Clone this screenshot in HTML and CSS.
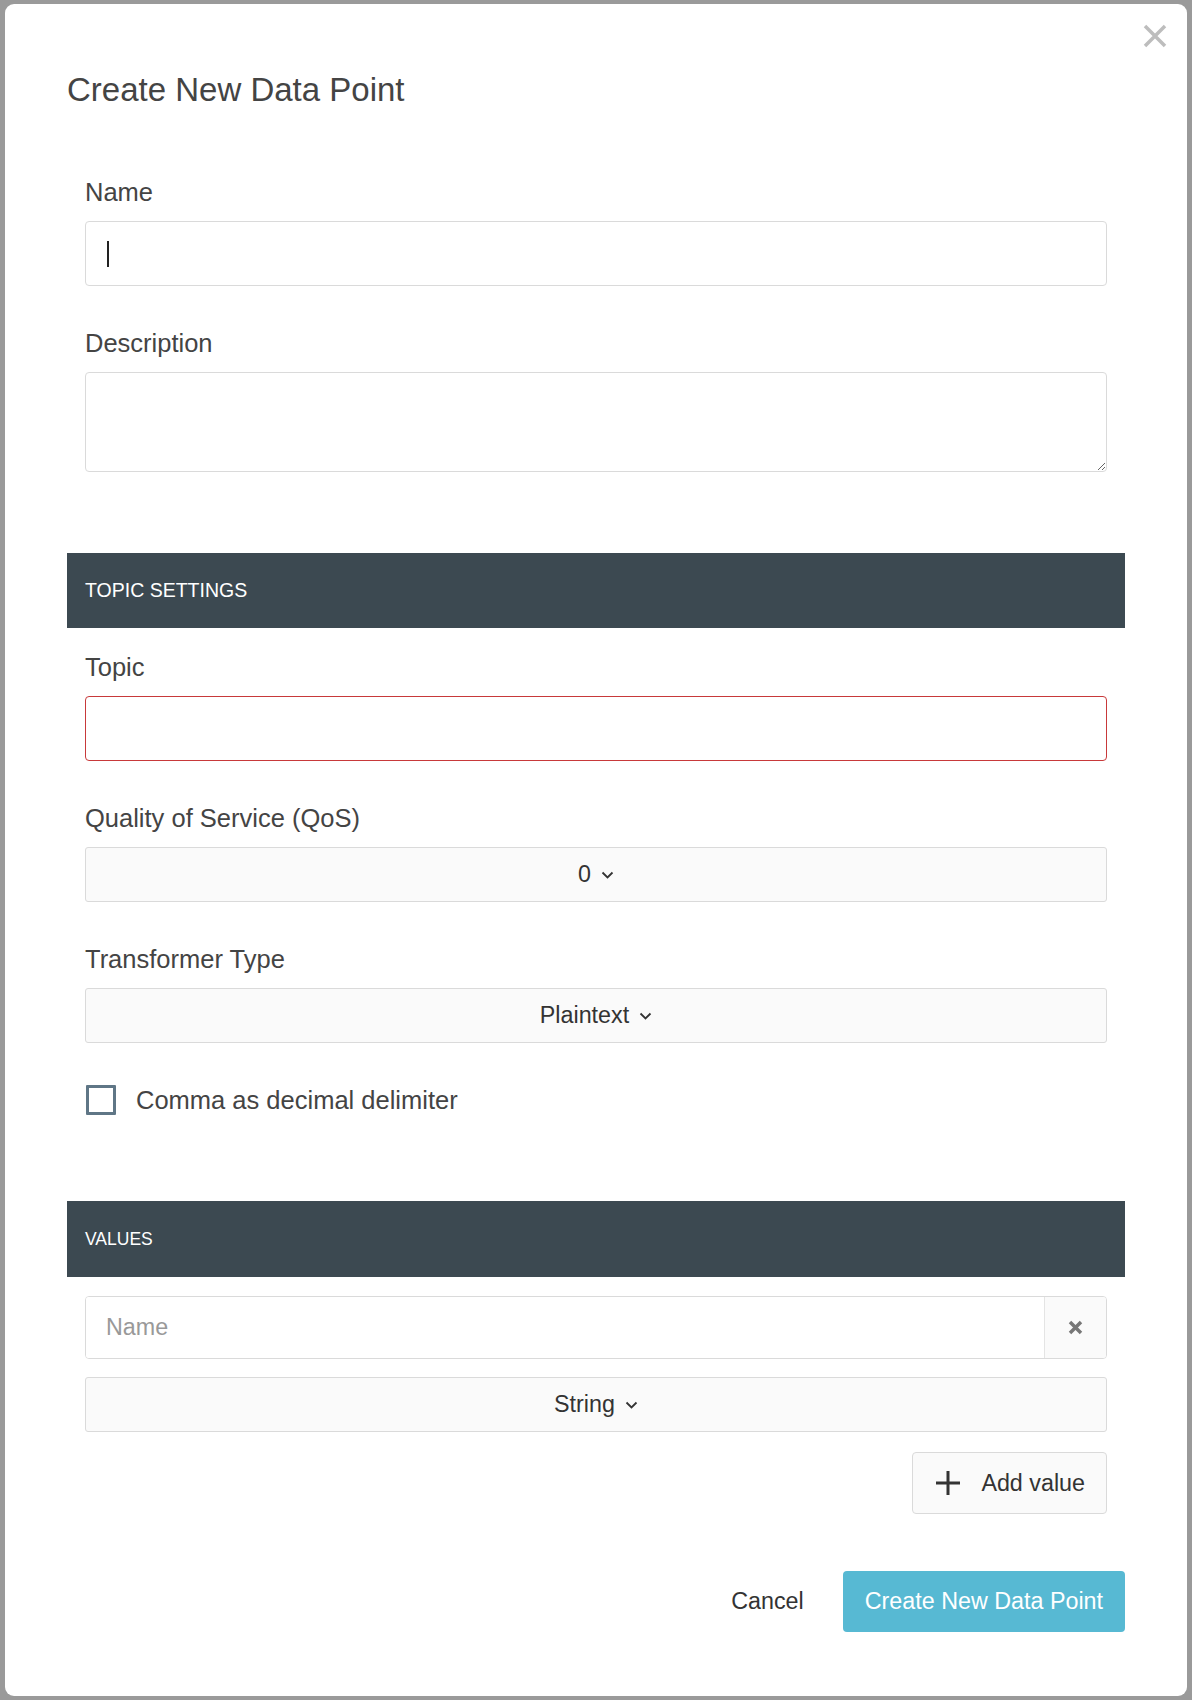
FILE: index.html
```html
<!DOCTYPE html>
<html lang="en">
<head>
    <meta charset="UTF-8">
    <meta name="viewport" content="width=device-width, initial-scale=1.0">
    <title>Create New Data Point</title>
    <link rel="stylesheet" href="styles.css">
</head>
<body>
    <div class="modal">
        <button class="close" type="button" aria-label="Close">
            <svg width="24" height="24" viewBox="0 0 24 24"><path d="M2 2L22 22M22 2L2 22" stroke="#bdbdbd" stroke-width="3.5" fill="none"/></svg>
        </button>

        <h2 class="modal-title">Create New Data Point</h2>

        <form>
            <div class="form-group">
                <label>Name</label>
                <div class="input-wrap">
                    <input type="text" class="form-control">
                    <span class="caret"></span>
                </div>
            </div>

            <div class="form-group">
                <label>Description</label>
                <textarea class="form-control textarea"></textarea>
            </div>

            <div class="section-title topic">TOPIC SETTINGS</div>

            <div class="form-group">
                <label>Topic</label>
                <input type="text" class="form-control invalid">
            </div>

            <div class="form-group">
                <label>Quality of Service (QoS)</label>
                <div class="select">
                    <span>0</span>
                    <svg width="13" height="8" viewBox="0 0 13 8"><path d="M1.5 1.5L6.5 6.5L11.5 1.5" stroke="#333" stroke-width="1.8" fill="none"/></svg>
                </div>
            </div>

            <div class="form-group">
                <label>Transformer Type</label>
                <div class="select">
                    <span>Plaintext</span>
                    <svg width="13" height="8" viewBox="0 0 13 8"><path d="M1.5 1.5L6.5 6.5L11.5 1.5" stroke="#333" stroke-width="1.8" fill="none"/></svg>
                </div>
            </div>

            <div class="checkbox-row">
                <span class="checkbox"></span>
                <span class="checkbox-label">Comma as decimal delimiter</span>
            </div>

            <div class="section-title values">VALUES</div>

            <div class="values-body">
                <div class="input-group">
                    <input type="text" placeholder="Name">
                    <span class="addon">
                        <svg width="15" height="15" viewBox="0 0 15 15"><path d="M2 2L13 13M13 2L2 13" stroke="#777" stroke-width="3.5" fill="none"/></svg>
                    </span>
                </div>

                <div class="select string-select">
                    <span>String</span>
                    <svg width="13" height="8" viewBox="0 0 13 8"><path d="M1.5 1.5L6.5 6.5L11.5 1.5" stroke="#333" stroke-width="1.8" fill="none"/></svg>
                </div>

                <div class="add-row">
                    <button type="button" class="btn-default">
                        <svg width="26" height="26" viewBox="0 0 26 26"><path d="M13 1V25M1 13H25" stroke="#333" stroke-width="3" fill="none"/></svg>
                        Add value
                    </button>
                </div>
            </div>

            <div class="modal-footer">
                <button type="button" class="btn-link">Cancel</button>
                <button type="button" class="btn-primary">Create New Data Point</button>
            </div>
        </form>
    </div>
</body>
</html>
```

FILE: styles.css
```css
body {
    font-family: "Liberation Sans", Arial, sans-serif;
    margin: 0;
    padding: 4px 5px;
    background-color: #9a9a9a;
}

button,
input,
textarea {
    font-family: inherit;
}

.modal {
    position: relative;
    width: 1182px;
    height: 1692px;
    box-sizing: border-box;
    background: white;
    border-radius: 9px;
    padding: 66px 62px 0;
}

.close {
    position: absolute;
    top: 20px;
    right: 20px;
    background: none;
    border: none;
    padding: 0;
    width: 24px;
    height: 24px;
}

.modal-title {
    margin: 0 0 67px;
    font-size: 33px;
    line-height: 40px;
    font-weight: normal;
    color: #444;
}

.form-group {
    padding: 0 18px;
    margin-bottom: 42px;
}

.form-group label {
    display: block;
    font-size: 25.5px;
    line-height: 30px;
    color: #444;
    margin-bottom: 14px;
}

.form-control {
    display: block;
    width: 100%;
    height: 65px;
    box-sizing: border-box;
    border: 1px solid #dadada;
    border-radius: 4px;
    background: white;
    outline: none;
}

.input-wrap {
    position: relative;
}

.caret {
    position: absolute;
    left: 22px;
    top: 20px;
    width: 2px;
    height: 26px;
    background: #222;
}

.textarea {
    height: 100px;
}

.invalid {
    border-color: #c8393a;
}

.section-title {
    display: flex;
    align-items: center;
    padding-left: 18px;
    background-color: #3c4951;
    color: white;
}

.section-title.topic {
    height: 75px;
    font-size: 19.5px;
    margin: 81px 0 24px;
}

.section-title.values {
    height: 76px;
    font-size: 17.5px;
    margin: 86px 0 19px;
}

.select {
    display: flex;
    justify-content: center;
    align-items: center;
    gap: 10px;
    height: 55px;
    box-sizing: border-box;
    border: 1px solid #dadada;
    border-radius: 3px;
    background: #fafafa;
    font-size: 23.3px;
    color: #333;
}

.checkbox-row {
    display: flex;
    align-items: center;
    gap: 20px;
    padding-left: 19px;
    height: 30px;
}

.checkbox {
    width: 30px;
    height: 30px;
    box-sizing: border-box;
    border: 3px solid #5f7686;
    border-radius: 1px;
}

.checkbox-label {
    font-size: 25.5px;
    color: #444;
}

.values-body {
    padding: 0 18px;
}

.input-group {
    display: flex;
    height: 63px;
    box-sizing: border-box;
    border: 1px solid #dadada;
    border-radius: 4px;
    overflow: hidden;
}

.input-group input {
    flex: 1;
    border: none;
    outline: none;
    padding: 0 0 0 20px;
    font-size: 23.3px;
    color: #333;
}

.input-group input::placeholder {
    color: #999;
}

.addon {
    width: 61px;
    display: flex;
    justify-content: center;
    align-items: center;
    border-left: 1px solid #e4e4e4;
    background: #fafafa;
}

.string-select {
    margin-top: 18px;
}

.add-row {
    display: flex;
    justify-content: flex-end;
    margin-top: 20px;
}

.btn-default {
    display: flex;
    align-items: center;
    gap: 20px;
    height: 62px;
    padding: 0 21px 0 22px;
    background: #fafafa;
    border: 1px solid #dadada;
    border-radius: 4px;
    font-size: 23.3px;
    color: #333;
}

.modal-footer {
    display: flex;
    justify-content: flex-end;
    align-items: center;
    gap: 17px;
    margin-top: 57px;
}

.btn-link {
    height: 61px;
    padding: 0 22px;
    background: none;
    border: none;
    font-size: 23.3px;
    color: #333;
}

.btn-primary {
    height: 61px;
    padding: 0 22px;
    background-color: #57b9d3;
    border: none;
    border-radius: 4px;
    font-size: 23.3px;
    color: white;
}
```
